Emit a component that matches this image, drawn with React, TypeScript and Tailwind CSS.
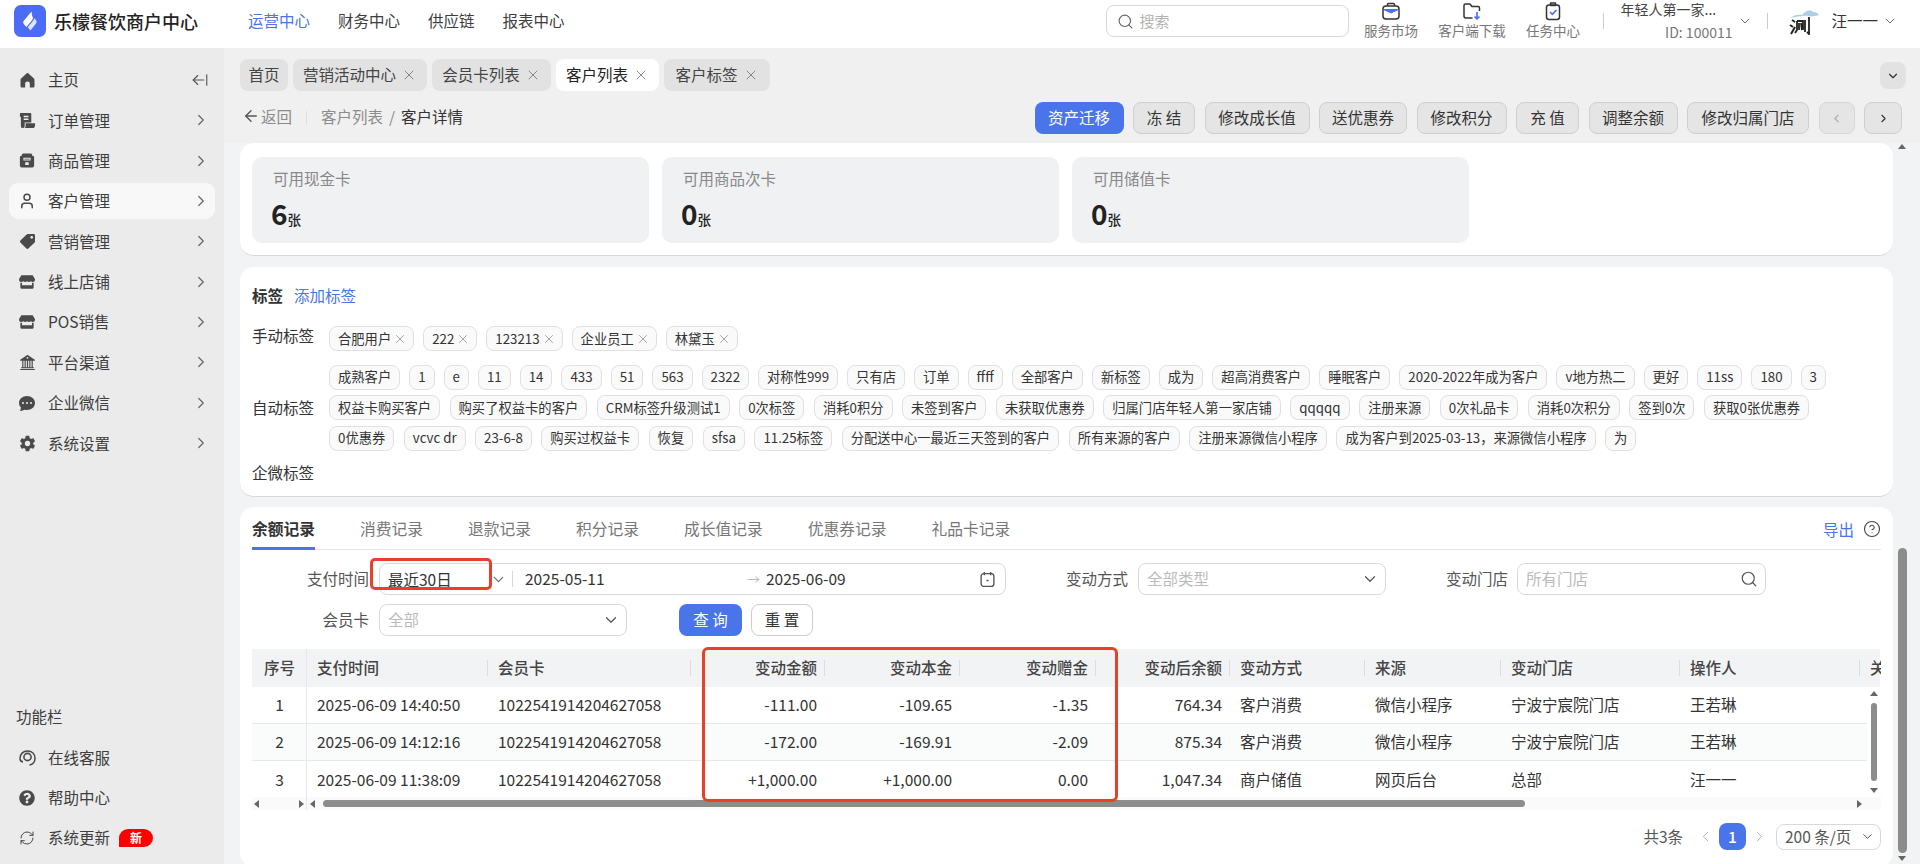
import { ArrowLeft, ArrowLeftFromLine, ChevronDown, ChevronLeft, ChevronRight, CircleHelp, RefreshCw, Search, User, X } from "lucide-react"
import { BsBank2, BsChatDotsFill } from "react-icons/bs"
import { FaQuestionCircle, FaStore, FaTag } from "react-icons/fa"
import { IoSettingsSharp } from "react-icons/io5"

const fontStack = { fontFamily: '"Noto Sans CJK SC", "Noto Sans", sans-serif' }

function HomeIcon() {
  return (
    <svg viewBox="0 0 18 18" className="w-[17px] h-[17px]" fill="#4a4a4a">
      <path d="M8 1.500c.6-.5 1.400-.5 2 0l5.500 5c.6.5.9 1.200.9 2v6.500a1.500 1.500 0 0 1-1.500 1.500h-3.400v-4a2.500 2.500 0 0 0-5 0v4H3.100a1.500 1.500 0 0 1-1.500-1.500V8.500c0-.8.3-1.500.9-2z" />
    </svg>
  )
}

function OrderIcon() {
  return (
    <svg viewBox="0 0 18 18" className="w-[17px] h-[17px]" fill="#4a4a4a">
      <path d="M1 1h11a1 1 0 0 1 1 1v9H6v4a2 2 0 0 1-2 2 2 2 0 0 1-2-2V5H1z" />
      <path d="M7 12h10v2a3 3 0 0 1-3 3H6a3 3 0 0 0 1-3z" />
      <path d="M5 4h5v1.500H5zM5 7h5v1.500H5z" fill="#ebebeb" />
    </svg>
  )
}

function BagIcon() {
  return (
    <svg viewBox="0 0 18 18" className="w-[16px] h-[17px]" fill="#4a4a4a">
      <path d="M5 1h8a2 2 0 0 1 2 2v1h1a1 1 0 0 1 1 1v10a2 2 0 0 1-2 2H3a2 2 0 0 1-2-2V5a1 1 0 0 1 1-1h1V3a2 2 0 0 1 2-2z" />
      <path d="M5 6h8v3H5zM6 7v1h6V7zM7 11h4v3H7z" fill="#ebebeb" />
    </svg>
  )
}

function ServiceIcon() {
  return (
    <svg viewBox="0 0 18 18" className="w-[18px] h-[18px]" fill="none" stroke="#4a4a4a" strokeWidth="1.600">
      <circle cx="9.500" cy="8" r="3.600" />
      <path d="M2 9.500C2 5 5 2 9.500 2S17 5 17 9.500c0 3.500-2.500 6-5.500 6.500" />
      <path d="M2 9.500c0 2 1.200 3.200 3 3.400" />
    </svg>
  )
}

function LogoMark() {
  return (
    <svg viewBox="0 0 32 32" className="w-[32px] h-[32px] shrink-0">
      <rect width="32" height="32" rx="7" fill="#4a6cf7" />
      <path d="M17.500 6.500 10 15.500c-1 1.300-1 2.300-.2 3.400l2.600 3.200 5.800-7.100c1-1.300 1-2.400.1-3.400z" fill="#ffffff" />
      <path d="M19.800 12.500l2.200 2.800c.8 1.100.8 2.100 0 3.200l-5.600 7-2.600-3.200 5.600-7c.9-1 1.100-1.800.4-2.800z" fill="#dfe6ff" />
    </svg>
  )
}

function TopIcon({ kind }: { kind: string }) {
  return (
    <svg viewBox="0 0 20 20" className="w-[20px] h-[20px]" fill="none" stroke="#333333" strokeWidth="1.500" strokeLinejoin="round">
      {kind === "market" && (
        <>
          <path d="M6.500 5V3.500a1 1 0 0 1 1-1h5a1 1 0 0 1 1 1V5" />
          <rect x="2" y="5" width="16" height="13" rx="3" />
          <path d="M2.500 8.500h15L10 12z" fill="#4a74ea" stroke="#4a74ea" strokeWidth="1" />
        </>
      )}
      {kind === "download" && (
        <>
          <path d="M10.500 17H4a2 2 0 0 1-2-2V4.500A1.500 1.500 0 0 1 3.500 3H8l2 2.500h6A1.500 1.500 0 0 1 17.500 7v3" />
          <path d="M15 11v6.500M12.500 15.500l2.500 2.500 2.500-2.500" stroke="#4a74ea" strokeWidth="1.700" />
        </>
      )}
      {kind === "task" && (
        <>
          <path d="M7.500 2h5v2.500h-5z" />
          <rect x="3.500" y="4" width="13" height="14.500" rx="2.500" />
          <path d="M7 11l2.300 2.300L13.500 9" stroke="#4a74ea" strokeWidth="1.700" />
        </>
      )}
    </svg>
  )
}

function Avatar() {
  return (
    <svg viewBox="0 0 34 28" className="w-[34px] h-[28px] shrink-0">
      <rect width="34" height="28" fill="#ffffff" />
      <path d="M4 11c4-3 8-4 12-3 3-4 8-6 11-3 3 0 5 1 6 3-4 1-7 2-10 1-6-1-12 1-19 2z" fill="#a9cfe6" />
      <path d="M6 13l3 2M4 18l3 2M5 27l4-7" stroke="#222222" strokeWidth="2" fill="none" />
      <path d="M11 14v9l-2 3M11 14h6v9M13 16l0 7M15 16l1 7M19 13v12M23 10v17l-2-2" stroke="#222222" strokeWidth="1.800" fill="none" />
    </svg>
  )
}

const menuItems: { label: string; icon: React.ReactNode; active?: boolean }[] = [
  { label: "订单管理", icon: <OrderIcon /> },
  { label: "商品管理", icon: <BagIcon /> },
  { label: "客户管理", icon: <User size={18} strokeWidth={2} color="#4a4a4a" />, active: true },
  { label: "营销管理", icon: <FaTag size={15} color="#4a4a4a" className="rotate-90" /> },
  { label: "线上店铺", icon: <FaStore size={16} color="#4a4a4a" /> },
  { label: "POS销售", icon: <FaStore size={16} color="#4a4a4a" /> },
  { label: "平台渠道", icon: <BsBank2 size={15} color="#4a4a4a" /> },
  { label: "企业微信", icon: <BsChatDotsFill size={16} color="#4a4a4a" /> },
  { label: "系统设置", icon: <IoSettingsSharp size={17} color="#4a4a4a" /> },
]

function Sidebar() {
  return (
    <aside className="w-[224px] shrink-0 bg-[#ebebeb] flex flex-col pt-[12px] pb-[8px] text-[15.5px] text-[#3d3d3d]">
      <div className="flex items-center h-[40px] pl-[18px] pr-[15px]">
        <span className="w-[18px] flex justify-center"><HomeIcon /></span>
        <span className="ml-[12px] flex-1">主页</span>
        <ArrowLeftFromLine size={18} strokeWidth={1.5} color="#555555" />
      </div>
      {menuItems.map((m) => (
        <div
          key={m.label}
          className={`flex items-center h-[36px] my-[2.2px] mx-[9px] pl-[9px] pr-[5px] rounded-[9px] ${m.active ? "bg-[#f8f8f8]" : ""}`}
        >
          <span className="w-[18px] flex justify-center">{m.icon}</span>
          <span className="ml-[12px] flex-1">{m.label}</span>
          <ChevronRight size={18} strokeWidth={1.6} color="#666666" />
        </div>
      ))}
      <div className="mt-auto pl-[16px] h-[24px] flex items-center">功能栏</div>
      <div className="mt-[11.5px] flex flex-col gap-[4px] pl-[18px]">
        <div className="flex items-center h-[36px]">
          <span className="w-[18px] flex justify-center"><ServiceIcon /></span>
          <span className="ml-[12px]">在线客服</span>
        </div>
        <div className="flex items-center h-[36px]">
          <span className="w-[18px] flex justify-center"><FaQuestionCircle size={16} color="#4a4a4a" /></span>
          <span className="ml-[12px]">帮助中心</span>
        </div>
        <div className="flex items-center h-[36px]">
          <span className="w-[18px] flex justify-center"><RefreshCw size={16} strokeWidth={1.5} color="#4a4a4a" /></span>
          <span className="ml-[12px]">系统更新</span>
          <span className="ml-[9px] w-[34px] h-[18px] bg-[#ff0000] rounded-t-full rounded-br-full text-white text-[12px] font-bold flex items-center justify-center">新</span>
        </div>
      </div>
    </aside>
  )
}

function Header() {
  return (
    <header className="h-[48px] shrink-0 bg-white flex items-center pl-[14px] pr-[22px] pb-[6px]">
      <LogoMark />
      <div className="ml-[8px] w-[194px] text-[18px] font-medium text-[#222222]">乐檬餐饮商户中心</div>
      <nav className="flex gap-[28px] text-[15.5px] text-[#3d3d3d]">
        <span className="text-[#4a74ea]">运营中心</span>
        <span>财务中心</span>
        <span>供应链</span>
        <span>报表中心</span>
      </nav>
      <div className="ml-auto w-[243px] h-[32px] border border-[#d9d9d9] rounded-[8px] flex items-center pl-[10px] text-[15px] text-[#b3b3b3]">
        <Search size={17} strokeWidth={1.6} color="#666666" />
        <span className="ml-[5px]">搜索</span>
      </div>
      <div className="ml-[1px] mb-[4px] flex text-[13.5px] text-[#777777] leading-[16px]">
        <div className="w-[81px] flex flex-col items-center"><TopIcon kind="market" /><span className="mt-[1px] whitespace-nowrap">服务市场</span></div>
        <div className="w-[81px] flex flex-col items-center"><TopIcon kind="download" /><span className="mt-[1px] whitespace-nowrap">客户端下载</span></div>
        <div className="w-[81px] flex flex-col items-center"><TopIcon kind="task" /><span className="mt-[1px] whitespace-nowrap">任务中心</span></div>
      </div>
      <div className="ml-[10px] w-px h-[16px] bg-[#cccccc]" />
      <div className="ml-[16px] w-[112px] text-[14px] leading-[23px] text-[#444444]">
        <div className="whitespace-nowrap">年轻人第一家...</div>
        <div className="text-right text-[#777777]">ID: 100011</div>
      </div>
      <ChevronDown size={16} strokeWidth={1.4} color="#666666" className="ml-[5px]" />
      <div className="ml-[14px] w-px h-[16px] bg-[#cccccc]" />
      <div className="ml-[18px]"><Avatar /></div>
      <span className="ml-[11px] text-[15.5px] text-[#333333] whitespace-nowrap">汪一一</span>
      <ChevronDown size={16} strokeWidth={1.4} color="#666666" className="ml-[4px]" />
    </header>
  )
}

const pageTabs = [
  { label: "首页", w: "w-[48px]" },
  { label: "营销活动中心", w: "w-[134px]", close: true },
  { label: "会员卡列表", w: "w-[119px]", close: true },
  { label: "客户列表", w: "w-[103px]", close: true, active: true },
  { label: "客户标签", w: "w-[106px]", close: true },
]

function TabsRow() {
  return (
    <div className="h-[43px] shrink-0 pt-[11px] pl-[16px] pr-[14px] flex gap-[5px] text-[15.5px]">
      {pageTabs.map((t) => (
        <div
          key={t.label}
          className={`${t.w} h-[32px] rounded-[8px] flex items-center justify-center gap-[5px] ${t.active ? "bg-white text-[#222222]" : "bg-[#e2e2e2] text-[#444444]"}`}
        >
          <span className="whitespace-nowrap">{t.label}</span>
          {t.close && <X size={16} strokeWidth={1.3} color="#777777" />}
        </div>
      ))}
      <div className="ml-auto mt-[3px] w-[26px] h-[27px] bg-[#e2e2e2] rounded-[8px] flex items-center justify-center">
        <ChevronDown size={14} strokeWidth={2} color="#333333" />
      </div>
    </div>
  )
}

const actions = [
  { label: "资产迁移", w: "w-[89px]", primary: true },
  { label: "冻 结", w: "w-[62px]" },
  { label: "修改成长值", w: "w-[105px]" },
  { label: "送优惠券", w: "w-[88px]" },
  { label: "修改积分", w: "w-[90px]" },
  { label: "充 值", w: "w-[63px]" },
  { label: "调整余额", w: "w-[89px]" },
  { label: "修改归属门店", w: "w-[122px]" },
]

function ActionRow() {
  return (
    <div className="h-[52px] shrink-0 flex items-start pt-[11px] pl-[18px] pr-[18px]">
      <ArrowLeft size={18} strokeWidth={1.8} color="#555555" className="mt-[5px]" />
      <span className="ml-[1px] mt-[3px] text-[15.5px] text-[#8c8c8c]">返回</span>
      <span className="ml-[14px] mt-[9px] w-px h-[14px] bg-[#dddddd]" />
      <span className="ml-[14px] mt-[3px] text-[15.5px] text-[#8c8c8c]">客户列表</span>
      <span className="ml-[6px] mt-[3px] text-[15.5px] text-[#8c8c8c]">/</span>
      <span className="ml-[6px] mt-[3px] text-[15.5px] text-[#333333]">客户详情</span>
      <div className="ml-auto flex gap-[9.5px] text-[15.5px]">
        {actions.map((a) => (
          <div
            key={a.label}
            className={`${a.w} h-[32px] rounded-[8px] flex items-center justify-center whitespace-nowrap ${a.primary ? "bg-[#4a74ea] text-white" : "bg-[#e5e5e5] border border-[#cfcfcf] text-[#333333]"}`}
          >
            {a.label}
          </div>
        ))}
        <div className="w-[36px] h-[32px] rounded-[8px] bg-[#e5e5e5] border border-[#d6d6d6] flex items-center justify-center text-[#aaaaaa]">
          <ChevronLeft size={13} strokeWidth={2} />
        </div>
        <div className="w-[38px] h-[32px] rounded-[8px] bg-[#e5e5e5] border border-[#cfcfcf] flex items-center justify-center text-[#333333]">
          <ChevronRight size={13} strokeWidth={2} />
        </div>
      </div>
    </div>
  )
}

const stats = [
  { label: "可用现金卡", value: "6" },
  { label: "可用商品次卡", value: "0" },
  { label: "可用储值卡", value: "0" },
]

function StatsCard() {
  return (
    <section className="h-[113px] bg-white rounded-[14px] border-b border-[#d8d8d8] pt-[14px] px-[12px] flex gap-[13px]">
      {stats.map((s) => (
        <div key={s.label} className="w-[397px] h-[86px] bg-[#f0f1f3] rounded-[10px] pl-[21px] pt-[10px]">
          <div className="text-[15.5px] leading-[22px] text-[#888888]">{s.label}</div>
          <div className="mt-[10px] -ml-[2px] flex items-end text-[#222222] leading-none">
            <span className="text-[28px] font-bold">{s.value}</span>
            <span className="text-[13.5px] font-medium mb-[1px]">张</span>
          </div>
        </div>
      ))}
    </section>
  )
}

const manualTags = ["合肥用户", "222", "123213", "企业员工", "林黛玉"]
const autoTagRows = [
  ["成熟客户", "1", "e", "11", "14", "433", "51", "563", "2322", "对称性999", "只有店", "订单", "ffff", "全部客户", "新标签", "成为", "超高消费客户", "睡眠客户", "2020-2022年成为客户", "v地方热二", "更好", "11ss", "180", "3"],
  ["权益卡购买客户", "购买了权益卡的客户", "CRM标签升级测试1", "0次标签", "消耗0积分", "未签到客户", "未获取优惠券", "归属门店年轻人第一家店铺", "qqqqq", "注册来源", "0次礼品卡", "消耗0次积分", "签到0次", "获取0张优惠券"],
  ["0优惠券", "vcvc dr", "23-6-8", "购买过权益卡", "恢复", "sfsa", "11.25标签", "分配送中心一最近三天签到的客户", "所有来源的客户", "注册来源微信小程序", "成为客户到2025-03-13，来源微信小程序", "为"],
]

function Tag({ label, close }: { label: string; close?: boolean }) {
  return (
    <span className={`h-[25px] pl-[8px] ${close ? "pr-[6px]" : "pr-[8px]"} bg-[#fafafa] border border-[#e0e0e0] rounded-[8px] flex items-center text-[13.3px] text-[#333333] whitespace-nowrap`}>
      {label}
      {close && <X size={14} strokeWidth={1.1} color="#777777" className="ml-[2px]" />}
    </span>
  )
}

function TagsCard() {
  return (
    <section className="mt-[11px] h-[230px] bg-white rounded-[14px] border-b border-[#d8d8d8] px-[12px] pt-[18px] text-[15.5px] text-[#333333]">
      <div className="flex items-center h-[22px]">
        <span className="font-bold">标签</span>
        <span className="ml-[11px] text-[#4a74ea]">添加标签</span>
      </div>
      <div className="mt-[19px] flex items-center h-[25px]">
        <span className="w-[77px] shrink-0 mb-[5px]">手动标签</span>
        <div className="flex gap-[9px]">
          {manualTags.map((t) => <Tag key={t} label={t} close />)}
        </div>
      </div>
      <div className="mt-[13.5px] flex items-center">
        <span className="w-[77px] shrink-0">自动标签</span>
        <div className="flex flex-col gap-[5.5px]">
          {autoTagRows.map((row, i) => (
            <div key={i} className={`flex ${i === 0 ? "gap-[9px]" : "gap-[9.5px]"}`}>
              {row.map((t) => <Tag key={t} label={t} />)}
            </div>
          ))}
        </div>
      </div>
      <div className="mt-[10px] leading-[22px]">企微标签</div>
    </section>
  )
}

const recordTabs = ["余额记录", "消费记录", "退款记录", "积分记录", "成长值记录", "优惠券记录", "礼品卡记录"]

function RecordTabs() {
  return (
    <div className="h-[43px] flex items-start border-b border-[#e5e5e5] text-[15.5px]">
      <div className="flex gap-[45px] text-[15.75px]">
        {recordTabs.map((t, i) => (
          <div
            key={t}
            className={`h-[43px] leading-[44px] ${i === 0 ? "font-bold text-[#333333] border-b-[3px] border-[#4a74ea]" : "text-[#777777]"}`}
          >
            {t}
          </div>
        ))}
      </div>
      <span className="ml-auto mt-[11px] leading-[22px] text-[#4a74ea]">导出</span>
      <CircleHelp size={18} strokeWidth={1.5} color="#444444" className="ml-[9px] mt-[13px]" />
    </div>
  )
}

function Filters() {
  return (
    <div className="text-[15.5px]">
      <div className="mt-[13px] flex items-center">
        <span className="w-[117px] text-right text-[#555555]">支付时间</span>
        <div className="relative ml-[10px] w-[627px] h-[32px] border border-[#d9d9d9] rounded-[8px] flex items-center pl-[8px] pr-[9px] text-[#333333]">
          <span className="w-[102px] pt-[1px]">最近30日</span>
          <ChevronDown size={17} strokeWidth={1.6} color="#666666" />
          <span className="ml-[5px] w-px h-[16px] bg-[#d9d9d9]" />
          <span className="ml-[12px] w-[222px]">2025-05-11</span>
          <span className="text-[#bbbbbb] text-[13px]">→</span>
          <span className="ml-[6px]">2025-06-09</span>
          <svg viewBox="0 0 16 16" className="ml-auto w-[17px] h-[19px]" fill="none" stroke="#555555" strokeWidth="1.300">
            <rect x="2" y="2.500" width="12" height="12" rx="2.500" />
            <path d="M5 1v3M11 1v3M7 9h2" />
          </svg>
          {/* red annotation around the preset select */}
          <span className="absolute left-[-10px] top-[-6px] w-[122px] h-[32px] border-[3px] border-[#e8402a] rounded-[5px]" />
        </div>
        <span className="ml-[60px] text-[#555555]">变动方式</span>
        <div className="ml-[10px] w-[248px] h-[32px] border border-[#d9d9d9] rounded-[8px] flex items-center justify-between pl-[8px] pr-[6px] text-[#bbbbbb]">
          全部类型
          <ChevronDown size={18} strokeWidth={1.6} color="#555555" />
        </div>
        <span className="ml-[60px] text-[#555555]">变动门店</span>
        <div className="ml-[9px] w-[249px] h-[32px] border border-[#d9d9d9] rounded-[8px] flex items-center justify-between pl-[8px] pr-[7px] text-[#bbbbbb]">
          所有门店
          <Search size={18} strokeWidth={1.6} color="#555555" />
        </div>
      </div>
      <div className="mt-[9px] flex items-center">
        <span className="w-[117px] text-right text-[#555555]">会员卡</span>
        <div className="ml-[10px] w-[248px] h-[32px] border border-[#d9d9d9] rounded-[8px] flex items-center justify-between pl-[8px] pr-[6px] text-[#bbbbbb]">
          全部
          <ChevronDown size={18} strokeWidth={1.6} color="#555555" />
        </div>
        <div className="ml-[52px] w-[63px] h-[32px] rounded-[8px] bg-[#4a74ea] text-white flex items-center justify-center">查 询</div>
        <div className="ml-[9px] w-[62px] h-[32px] rounded-[8px] bg-white border border-[#cccccc] text-[#333333] flex items-center justify-center">重 置</div>
      </div>
    </div>
  )
}

const headers = [
  { label: "序号", align: "center" },
  { label: "支付时间", align: "left" },
  { label: "会员卡", align: "left" },
  { label: "变动金额", align: "right" },
  { label: "变动本金", align: "right" },
  { label: "变动赠金", align: "right" },
  { label: "变动后余额", align: "right" },
  { label: "变动方式", align: "left" },
  { label: "来源", align: "left" },
  { label: "变动门店", align: "left" },
  { label: "操作人", align: "left" },
  { label: "关联单号", align: "left" },
]

const rows = [
  ["1", "2025-06-09 14:40:50", "1022541914204627058", "-111.00", "-109.65", "-1.35", "764.34", "客户消费", "微信小程序", "宁波宁宸院门店", "王若琳"],
  ["2", "2025-06-09 14:12:16", "1022541914204627058", "-172.00", "-169.91", "-2.09", "875.34", "客户消费", "微信小程序", "宁波宁宸院门店", "王若琳"],
  ["3", "2025-06-09 11:38:09", "1022541914204627058", "+1,000.00", "+1,000.00", "0.00", "1,047.34", "商户储值", "网页后台", "总部", "汪一一"],
]

const gridCols = "grid grid-cols-[55px_181px_203px_134px_135px_136px_134px_135px_136px_179px_180px_200px]"

function RecordsTable() {
  return (
    <div className="relative mt-[13px] text-[15.5px]">
      <div className="overflow-hidden">
        <div className={`${gridCols} w-[1628px] h-[38px] bg-[#f2f3f5] font-medium text-[#444444]`}>
          {headers.map((h, i) => (
            <div key={h.label} className={`flex items-center ${i === 0 ? "border-r border-[#e8e8e8]" : ""}`}>
              <span
                className={`flex-1 whitespace-nowrap ${h.align === "center" ? "text-center pl-[1px]" : h.align === "right" ? "text-right pr-[7px]" : "pl-[10px]"}`}
              >
                {h.label}
              </span>
              {i > 0 && <span className="w-px h-[16px] bg-[#dddddd]" />}
            </div>
          ))}
        </div>
      </div>
      <div className="flex h-[110px]">
        <div className="w-[1615px] overflow-hidden">
          {rows.map((row, r) => (
            <div key={row[0]} className={`${gridCols} w-[1628px] h-[37px] ${r < 2 ? "border-b border-[#e8e8e8]" : ""} ${r === 1 ? "bg-[#fafbfb]" : ""} text-[#333333]`}>
              {row.map((cell, i) => {
                const align = headers[i].align
                return (
                  <div
                    key={i}
                    className={`flex items-center whitespace-nowrap ${i === 0 ? "justify-center pl-[1px] border-r border-[#e8e8e8]" : align === "right" ? "justify-end pr-[8px]" : "pl-[10px]"}`}
                  >
                    {cell}
                  </div>
                )
              })}
            </div>
          ))}
        </div>
        <div className="w-[13px] flex flex-col items-center justify-between py-[4px] text-[#8c8c8c]">
          <span className="w-0 h-0 border-x-[4px] border-x-transparent border-b-[5px] border-b-[#666666]" />
          <span className="w-[6px] h-[78px] rounded-full bg-[#8c8c8c]" />
          <span className="w-0 h-0 border-x-[4px] border-x-transparent border-t-[5px] border-t-[#666666]" />
        </div>
      </div>
      <div className="h-[13px] bg-[#fafafa] flex items-center">
        <div className="w-[55px] border-r border-[#e8e8e8] h-full flex items-center justify-between px-[2px]">
          <span className="w-0 h-0 border-y-[4px] border-y-transparent border-r-[5px] border-r-[#666666]" />
          <span className="w-0 h-0 border-y-[4px] border-y-transparent border-l-[5px] border-l-[#666666]" />
        </div>
        <span className="ml-[3px] w-0 h-0 border-y-[4px] border-y-transparent border-r-[5px] border-r-[#666666]" />
        <span className="ml-[8px] w-[1202px] h-[7px] rounded-full bg-[#8c8c8c]" />
        <span className="ml-[332px] w-0 h-0 border-y-[4px] border-y-transparent border-l-[5px] border-l-[#666666]" />
      </div>
      {/* red annotation around the amount columns */}
      <span className="absolute left-[450px] top-[-2px] w-[416px] h-[155px] border-[3px] border-[#e8402a] rounded-[6px]" />
    </div>
  )
}

function Pagination() {
  return (
    <div className="mt-[13px] flex items-center justify-end text-[15.5px] text-[#555555]">
      <span>共3条</span>
      <ChevronLeft size={17} strokeWidth={1.3} color="#aaaaaa" className="ml-[14px]" />
      <span className="ml-[5px] w-[27px] h-[27px] rounded-[8px] bg-[#4a74ea] text-white flex items-center justify-center font-medium">1</span>
      <ChevronRight size={17} strokeWidth={1.3} color="#aaaaaa" className="ml-[5px]" />
      <div className="ml-[8px] w-[105px] h-[26px] border border-[#d9d9d9] rounded-[8px] flex items-center justify-between pl-[8px] pr-[5px]">
        200 条/页
        <ChevronDown size={15} strokeWidth={1.6} color="#555555" />
      </div>
    </div>
  )
}

function RecordsCard() {
  return (
    <section className="mt-[10px] h-[360px] bg-white rounded-[14px] px-[12px]">
      <RecordTabs />
      <Filters />
      <RecordsTable />
      <Pagination />
    </section>
  )
}

export default function App() {
  return (
    <div className="h-[864px] w-[1920px] overflow-hidden flex flex-col bg-[#f0f0f0]" style={fontStack}>
      <Header />
      <div className="flex-1 flex min-h-0">
        <Sidebar />
        <main className="flex-1 flex flex-col min-w-0">
          <TabsRow />
          <ActionRow />
          <div className="flex-1 min-h-0 flex bg-[#f2f3f5] overflow-hidden">
            <div className="w-[1669px] pl-[16px] shrink-0">
              <div className="w-[1653px]">
                <StatsCard />
                <TagsCard />
                <RecordsCard />
              </div>
            </div>
            <div className="w-[14px] ml-[2px] flex flex-col items-center justify-between pb-[3px] pt-[1px]">
              <span className="w-0 h-0 border-x-[4px] border-x-transparent border-b-[5px] border-b-[#666666]" />
              <span className="mt-auto w-[9px] h-[305px] rounded-full bg-[#8c8c8c]" />
              <span className="mt-[3px] w-0 h-0 border-x-[4px] border-x-transparent border-t-[5px] border-t-[#666666]" />
            </div>
          </div>
        </main>
      </div>
    </div>
  )
}
